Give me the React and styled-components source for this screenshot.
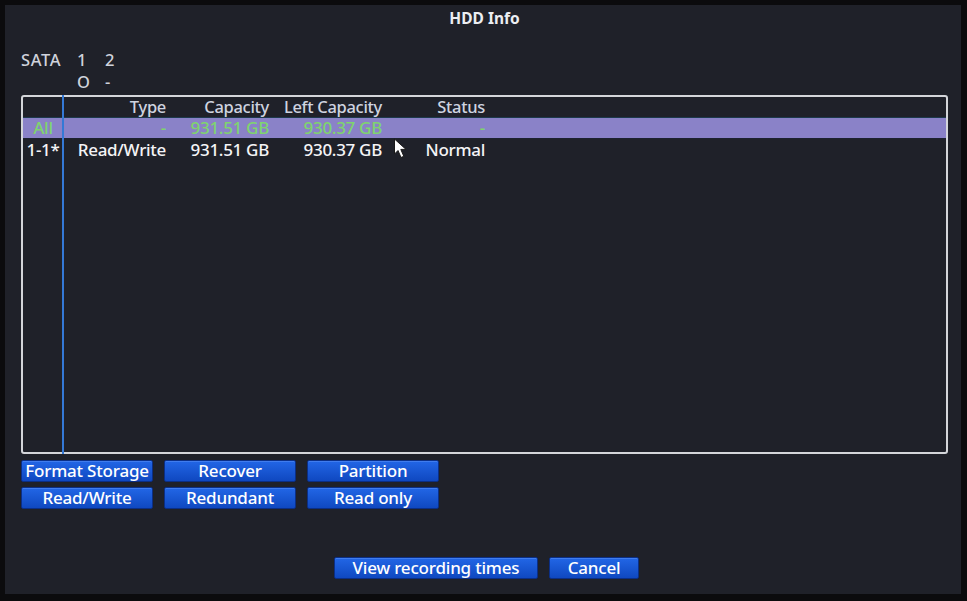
import React from 'react';
import styled, { createGlobalStyle } from 'styled-components';

const GlobalStyle = createGlobalStyle`
  html, body {
    margin: 0;
    padding: 0;
    background: #0b0b0d;
  }
  body {
    font-family: "Noto Sans", "Open Sans", sans-serif;
    -webkit-font-smoothing: antialiased;
  }
`;

const columns = [
  { key: 'id', title: '' },
  { key: 'type', title: 'Type' },
  { key: 'capacity', title: 'Capacity' },
  { key: 'left', title: 'Left Capacity' },
  { key: 'status', title: 'Status' }
];

const rows = [
  { id: 'All', type: '-', capacity: '931.51 GB', left: '930.37 GB', status: '-', selected: true },
  { id: '1-1*', type: 'Read/Write', capacity: '931.51 GB', left: '930.37 GB', status: 'Normal', cursor: true }
];

const actions = [
  ['Format Storage', 'Recover', 'Partition'],
  ['Read/Write', 'Redundant', 'Read only']
];

const Cursor = () => (
  <CursorIcon width="15" height="21" viewBox="0 0 15 21">
    <path
      d="M1.5 1 L1.5 16 L5 12.5 L8 19.5 L10.8 18.3 L7.8 11.4 L13 11.4 Z"
      fill="#ffffff"
      stroke="#1a1a1a"
      strokeWidth="1"
      strokeLinejoin="round"
    />
  </CursorIcon>
);

const App = () => {
  return (
    <>
      <GlobalStyle />
      <Frame>
        <Panel>
          <Title>HDD Info</Title>
          <SataGrid>
            <SataText>SATA</SataText>
            <SataText>1</SataText>
            <SataText>2</SataText>
            <span />
            <SataText>O</SataText>
            <SataText>-</SataText>
          </SataGrid>
          <TableBox>
            <Row header>
              {columns.map(col => (
                <Cell key={col.key} first={col.key === 'id'}>
                  {col.title}
                </Cell>
              ))}
              <span />
            </Row>
            {rows.map(row => (
              <Row key={row.id} selected={row.selected}>
                {columns.map(col => (
                  <Cell key={col.key} first={col.key === 'id'}>
                    {row[col.key]}
                    {col.key === 'left' && row.cursor && <Cursor />}
                  </Cell>
                ))}
                <span />
              </Row>
            ))}
          </TableBox>
          <ActionGrid>
            {actions.flat().map(label => (
              <BlueButton key={label}>{label}</BlueButton>
            ))}
          </ActionGrid>
          <Footer>
            <BlueButton wide>View recording times</BlueButton>
            <BlueButton small>Cancel</BlueButton>
          </Footer>
        </Panel>
      </Frame>
    </>
  );
};

const Frame = styled.div`
  width: 967px;
  height: 601px;
  box-sizing: border-box;
  background: #0b0b0d;
  padding: 5px 6px 7px 5px;
`;

const Panel = styled.div`
  height: 100%;
  box-sizing: border-box;
  background: #1f2129;
  display: flex;
  flex-direction: column;
  padding: 0 13px 0 16px;
  color: #f2f2f4;
`;

const Title = styled.div`
  height: 26px;
  line-height: 26px;
  text-align: center;
  font-weight: 700;
  font-size: 15.5px;
  color: #eceef2;
`;

const SataGrid = styled.div`
  margin-top: 18px;
  display: grid;
  grid-template-columns: 56px 28px 29px;
  grid-auto-rows: 22px;
  align-items: center;
  line-height: 22px;
`;

const SataText = styled.span`
  font-size: 16.5px;
  font-weight: 500;
  color: #cfd3dc;
  letter-spacing: 0.6px;
`;

const TableBox = styled.div`
  position: relative;
  margin-top: 2px;
  height: 359px;
  box-sizing: border-box;
  border: 2px solid #d4d6da;
  border-radius: 3px;

  &::after {
    content: '';
    position: absolute;
    left: 39px;
    top: -2px;
    bottom: -2px;
    width: 2px;
    background: #3479d6;
  }
`;

const Row = styled.div`
  display: grid;
  grid-template-columns: 40px 106px 103px 113px 103px 1fr;
  height: ${p => (p.header ? '20px' : '21px')};
  line-height: ${p => (p.header ? '20px' : '21px')};
  align-items: center;
  font-size: ${p => (p.header ? '16.5px' : '17px')};
  font-weight: 500;
  color: ${p => (p.selected ? '#7fd46e' : p.header ? '#cfd4e0' : '#f4f4f6')};
  background: ${p => (p.selected ? '#8a82c8' : 'transparent')};
  border-bottom: ${p => (p.selected ? '1px solid #1d2230' : 'none')};
  box-shadow: ${p => (p.selected ? 'inset 0 1px 0 #1d3a4c' : 'none')};
  letter-spacing: -0.3px;
`;

const Cell = styled.div`
  position: relative;
  white-space: nowrap;
  text-align: ${p => (p.first ? 'center' : 'right')};
  padding-right: ${p => (p.first ? '0' : '3px')};
`;

const CursorIcon = styled.svg`
  position: absolute;
  left: 121px;
  top: -1px;
`;

const ActionGrid = styled.div`
  margin-top: 6px;
  display: grid;
  grid-template-columns: repeat(3, 132px);
  grid-auto-rows: 22px;
  column-gap: 11px;
  row-gap: 5px;
`;

const BlueButton = styled.div`
  box-sizing: border-box;
  width: ${p => (p.wide ? '204px' : p.small ? '90px' : 'auto')};
  height: 22px;
  line-height: 20px;
  text-align: center;
  font-size: 17px;
  font-weight: 500;
  letter-spacing: -0.2px;
  color: #ffffff;
  white-space: nowrap;
  border: 1px solid #0b2f86;
  border-radius: 2px;
  background: linear-gradient(#2266e6, #0f48c0);
  box-shadow: inset 0 1px 0 rgba(120, 170, 255, 0.35);
`;

const Footer = styled.div`
  margin-top: 48px;
  display: flex;
  justify-content: center;
  gap: 11px;
  padding-left: 4px;
`;

export default App;
